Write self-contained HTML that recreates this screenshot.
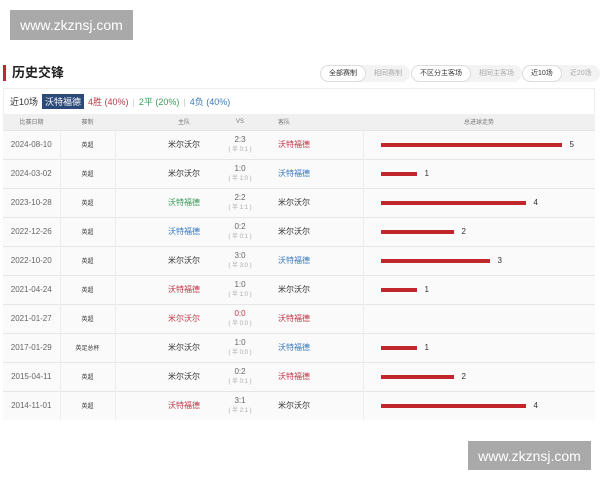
<!DOCTYPE html>
<html><head><meta charset="utf-8"><style>
*{margin:0;padding:0;box-sizing:border-box}
body{width:600px;height:480px;background:#fff;font-family:"Liberation Sans","Noto Sans CJK SC",sans-serif;position:relative;overflow:hidden;color:#333}
.wm{position:absolute;background:#a9a9a9;color:#fff;font-size:14px;display:flex;align-items:center;justify-content:center}
.title{position:absolute;left:3px;top:65px;height:16px;border-left:3px solid #c0272d;padding-left:6px;font-size:13px;font-weight:bold;line-height:16px;color:#222}
.seg{position:absolute;top:65px;height:17px;border-radius:9px;background:#f3f3f3;font-size:7px;display:flex;align-items:center}
.seg span{padding:0 8px;height:17px;line-height:17px;border-radius:9px;color:#aaa}
.seg span.on{background:#fff;border:1px solid #ddd;color:#333;line-height:15px}
.box{position:absolute;left:3px;top:88px;width:592px;height:332px;border:1px solid #eee}
.sub{position:absolute;left:10px;top:94px;font-size:9px;display:flex;align-items:center;gap:4px}
.badge{background:#2b4a7a;color:#fff;padding:1px 3px}
table{position:absolute;left:3px;top:114px;width:592px;border-collapse:collapse;font-size:8px;table-layout:fixed}
th{height:16px;background:#f0f0f0;color:#777;font-weight:normal;font-size:6px}
td{height:29px;border-top:1px solid #e6e6e6;background:#fafafa;text-align:center;color:#666;position:relative}
td.d{font-size:8px}
td.t{font-size:6px;color:#333;border-left:1px solid #eee;border-right:1px solid #eee}
td.h{text-align:right;padding-right:20px;color:#333}
td.s{line-height:10px;font-size:8px}
td.s i{display:block;font-style:normal;font-size:6px;color:#aaa}
td.a{text-align:left;padding-left:18px;color:#333;border-right:1px solid #eee}
td.b{text-align:left}
.r{color:#c0394b!important}.bl{color:#3a7bbf!important}.g{color:#3a9a5b!important}
.bar{display:inline-block;height:4px;background:#c0272d;vertical-align:middle;margin-left:17px}
.n{font-size:8px;color:#333;margin-left:8px;vertical-align:middle}
</style></head><body>
<div class="wm" style="left:10px;top:10px;width:123px;height:30px">www.zkznsj.com</div>
<div class="wm" style="left:468px;top:441px;width:123px;height:29px">www.zkznsj.com</div>
<div class="title">历史交锋</div>
<div class="seg" style="left:320px"><span class="on">全部赛制</span><span>相同赛制</span></div>
<div class="seg" style="left:411px"><span class="on">不区分主客场</span><span>相同主客场</span></div>
<div class="seg" style="left:522px"><span class="on">近10场</span><span>近20场</span></div>
<div class="box"></div>
<div class="sub"><span>近10场</span><span class="badge">沃特福德</span><span class="r">4胜 (40%)</span><span style="color:#ccc">|</span><span class="g">2平 (20%)</span><span style="color:#ccc">|</span><span class="bl">4负 (40%)</span></div>
<table>
<colgroup><col style="width:57px"><col style="width:55px"><col style="width:105px"><col style="width:40px"><col style="width:103px"><col></colgroup>
<tr><th>比赛日期</th><th>赛制</th><th style="text-align:right;padding-right:30px">主队</th><th>VS</th><th style="text-align:left;padding-left:18px">客队</th><th>总进球走势</th></tr>
<tr><td class="d">2024-08-10</td><td class="t">英超</td><td class="h">米尔沃尔</td><td class="s">2:3<i>( 半 0:1 )</i></td><td class="a r">沃特福德</td><td class="b"><span class="bar" style="width:181px"></span><span class="n">5</span></td></tr>
<tr><td class="d">2024-03-02</td><td class="t">英超</td><td class="h">米尔沃尔</td><td class="s">1:0<i>( 半 1:0 )</i></td><td class="a bl">沃特福德</td><td class="b"><span class="bar" style="width:36px"></span><span class="n">1</span></td></tr>
<tr><td class="d">2023-10-28</td><td class="t">英超</td><td class="h g">沃特福德</td><td class="s">2:2<i>( 半 1:1 )</i></td><td class="a">米尔沃尔</td><td class="b"><span class="bar" style="width:145px"></span><span class="n">4</span></td></tr>
<tr><td class="d">2022-12-26</td><td class="t">英超</td><td class="h bl">沃特福德</td><td class="s">0:2<i>( 半 0:1 )</i></td><td class="a">米尔沃尔</td><td class="b"><span class="bar" style="width:73px"></span><span class="n">2</span></td></tr>
<tr><td class="d">2022-10-20</td><td class="t">英超</td><td class="h">米尔沃尔</td><td class="s">3:0<i>( 半 3:0 )</i></td><td class="a bl">沃特福德</td><td class="b"><span class="bar" style="width:109px"></span><span class="n">3</span></td></tr>
<tr><td class="d">2021-04-24</td><td class="t">英超</td><td class="h r">沃特福德</td><td class="s">1:0<i>( 半 1:0 )</i></td><td class="a">米尔沃尔</td><td class="b"><span class="bar" style="width:36px"></span><span class="n">1</span></td></tr>
<tr><td class="d">2021-01-27</td><td class="t">英超</td><td class="h r">米尔沃尔</td><td class="s r">0:0<i>( 半 0:0 )</i></td><td class="a r">沃特福德</td><td class="b"></td></tr>
<tr><td class="d">2017-01-29</td><td class="t">英足总杯</td><td class="h">米尔沃尔</td><td class="s">1:0<i>( 半 0:0 )</i></td><td class="a bl">沃特福德</td><td class="b"><span class="bar" style="width:36px"></span><span class="n">1</span></td></tr>
<tr><td class="d">2015-04-11</td><td class="t">英超</td><td class="h">米尔沃尔</td><td class="s">0:2<i>( 半 0:1 )</i></td><td class="a r">沃特福德</td><td class="b"><span class="bar" style="width:73px"></span><span class="n">2</span></td></tr>
<tr><td class="d">2014-11-01</td><td class="t">英超</td><td class="h r">沃特福德</td><td class="s">3:1<i>( 半 2:1 )</i></td><td class="a">米尔沃尔</td><td class="b"><span class="bar" style="width:145px"></span><span class="n">4</span></td></tr>
</table>
</body></html>
